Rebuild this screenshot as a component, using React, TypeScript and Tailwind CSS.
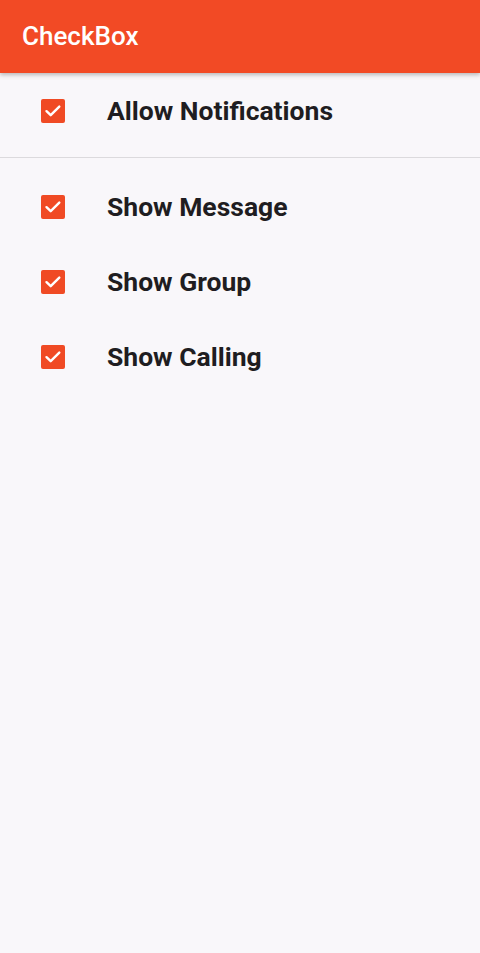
import { useState } from "react"

const items = ["Show Message", "Show Group", "Show Calling"]

function Box({ checked, onClick }: { checked: boolean; onClick: () => void }) {
  return (
    <button
      onClick={onClick}
      className={
        checked
          ? "w-6 h-6 rounded-[2px] bg-[#f04a24] flex items-center justify-center"
          : "w-6 h-6 rounded-[2px] border-2 border-[#555] flex items-center justify-center"
      }
    >
      {checked && (
        <svg width="24" height="24" viewBox="0 0 24 24" fill="none">
          <path d="M5.5 12.2l4.2 4 8.6-8.6" stroke="#fff" strokeWidth="2.4" strokeLinecap="round" strokeLinejoin="round" />
        </svg>
      )}
    </button>
  )
}

export default function App() {
  const [all, setAll] = useState(true)
  const [checks, setChecks] = useState([true, true, true])

  return (
    <div className="min-h-[953px] bg-[#f9f7fa] font-['Roboto',sans-serif]">
      <header className="h-[73px] bg-[#f24a25] flex items-center px-[22px] shadow-[0_2px_4px_rgba(0,0,0,0.25)] relative">
        <h1 className="text-white text-[26px] font-medium">CheckBox</h1>
      </header>

      <div className="h-[76px] flex items-center pl-[41px]">
        <Box checked={all} onClick={() => setAll(!all)} />
        <span className="ml-[42px] text-[26.5px] font-bold text-[#1f1d21]">Allow Notifications</span>
      </div>
      <div className="mt-[8px] h-px bg-[#dcdadd]" />

      <div className="pt-[11px]">
        {items.map((label, i) => (
          <div key={label} className="h-[75px] flex items-center pl-[41px]">
            <Box
              checked={checks[i]}
              onClick={() => setChecks(checks.map((c, j) => (j === i ? !c : c)))}
            />
            <span className="ml-[42px] text-[26.5px] font-bold text-[#1f1d21]">{label}</span>
          </div>
        ))}
      </div>
    </div>
  )
}
